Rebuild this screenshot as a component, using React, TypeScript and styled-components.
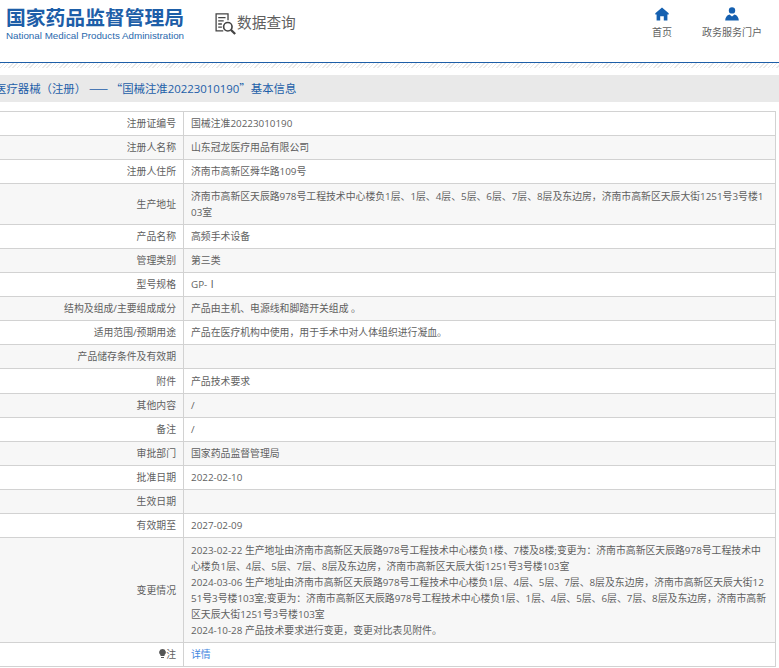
import React from 'react'
import styled, { createGlobalStyle } from 'styled-components'

const GlobalStyle = createGlobalStyle`
  html, body {
    margin: 0;
    padding: 0;
    background: #fff;
    overflow: hidden;
  }
  body {
    font-family: 'Open Sans', 'Noto Sans CJK SC', sans-serif;
    color: #5f5f5f;
  }
`

const Page = styled.div`
  width: 779px;
  height: 668px;
  overflow: hidden;
`

const Header = styled.header`
  display: flex;
  height: 62px;
  box-sizing: border-box;
  padding: 6px 0 0 6px;
`

const Logo = styled.div`
  width: 209px;
`

const LogoTitle = styled.div`
  color: #1d5ea8;
  font-family: 'Noto Sans CJK SC', sans-serif;
  font-size: 19.8px;
  font-weight: 700;
  line-height: 22px;
  white-space: nowrap;
`

const LogoSub = styled.div`
  color: #2a69ad;
  font-family: 'Liberation Sans', sans-serif;
  font-size: 9.8px;
  line-height: 12px;
  margin-top: 2px;
  white-space: nowrap;
`

const QueryTitle = styled.div`
  display: flex;
  align-items: flex-start;
  width: 415px;
  padding-top: 6px;
  color: #5f5f5f;
  font-size: 14.7px;
  line-height: 20px;
`

const Nav = styled.nav`
  display: flex;
  padding-top: 1px;
`

const NavItem = styled.div<{ wide?: boolean }>`
  display: flex;
  flex-direction: column;
  align-items: center;
  width: ${props => (props.wide ? '76px' : '64px')};
  color: #5f5f5f;
  font-size: 10px;
  line-height: 14px;
  white-space: nowrap;

  svg {
    display: block;
    margin-bottom: 4px;
  }
`

const BlueRule = styled.div`
  height: 1px;
  background: #1d5ea8;
`

const Hatch = styled.div`
  height: 5px;
  background: repeating-linear-gradient(135deg, #e8e8e8 0 1px, #fff 1px 3px);
`

const TitleBar = styled.div`
  margin-top: 7px;
  height: 27px;
  background: #e9e9e9;
  color: #1d5ea8;
  font-size: 11.4px;
  line-height: 27px;
  text-indent: -5px;
  white-space: nowrap;
  overflow: hidden;
`

const WideMark = styled.span`
  font-family: 'Noto Sans CJK SC', sans-serif;
`

const DetailTable = styled.table`
  margin: 9px 0 0 -1px;
  width: 777px;
  border-collapse: collapse;
  table-layout: fixed;
  font-size: 9.85px;
  line-height: 16px;
`

const Row = styled.tr<{ shaded: boolean }>`
  background: ${props => (props.shaded ? '#f7f7f7' : '#fff')};
`

const Label = styled.td`
  border: 1px solid #d2d2d2;
  padding: 3.2px 7px 3.96px 0;
  text-align: right;
  vertical-align: middle;
`

const Value = styled.td`
  border: 1px solid #d2d2d2;
  padding: 3.2px 7px 3.96px;
  text-align: left;
  word-break: break-all;
`

const DetailLink = styled.span`
  color: #3f87e0;
`

const SearchDocIcon = () => (
  <svg width="22" height="24" viewBox="0 0 24 24" fill="none" stroke="#444" strokeWidth="1.4">
    <path d="M9 19.5H1.2V1h13v7" />
    <path d="M3.5 5h8M3.5 8.5h6M3.5 12h4M3.5 15.5h4" />
    <circle cx="14" cy="15" r="4.6" strokeWidth="1.8" />
    <path d="M17.4 18.4 22 23" strokeWidth="2.4" />
  </svg>
)

const HomeIcon = () => (
  <svg width="14" height="14" viewBox="0 0 14 14" fill="#1560b0">
    <path d="M7 .5 .3 6.2v1.3h1.3V13.5h3.6V9.2h3.6v4.3h3.6V7.5h1.3V6.2Z" />
  </svg>
)

const PersonIcon = () => (
  <svg width="14" height="14" viewBox="0 0 14 14" fill="#1560b0">
    <circle cx="7" cy="3.4" r="3.2" />
    <path d="M.2 13.6c0-3.2 1.6-5.6 4.3-6.2L7 9.4l2.5-2c2.7.6 4.3 3 4.3 6.2Z" />
  </svg>
)

const BulbIcon = () => (
  <svg width="7" height="9" viewBox="0 0 7 9" fill="#555">
    <path d="M3.5 0a3.4 3.4 0 0 0-2 6.1V7h4v-.9a3.4 3.4 0 0 0-2-6.1ZM2 8h3v1H2Z" />
  </svg>
)

const rows: { label: React.ReactNode; value: React.ReactNode }[] = [
  { label: '注册证编号', value: '国械注准20223010190' },
  { label: '注册人名称', value: '山东冠龙医疗用品有限公司' },
  { label: '注册人住所', value: '济南市高新区舜华路109号' },
  {
    label: '生产地址',
    value: '济南市高新区天辰路978号工程技术中心楼负1层、1层、4层、5层、6层、7层、8层及东边房，济南市高新区天辰大街1251号3号楼103室',
  },
  { label: '产品名称', value: '高频手术设备' },
  { label: '管理类别', value: '第三类' },
  { label: '型号规格', value: 'GP-Ⅰ' },
  { label: '结构及组成/主要组成成分', value: '产品由主机、电源线和脚踏开关组成 。' },
  { label: '适用范围/预期用途', value: '产品在医疗机构中使用，用于手术中对人体组织进行凝血。' },
  { label: '产品储存条件及有效期', value: '' },
  { label: '附件', value: '产品技术要求' },
  { label: '其他内容', value: '/' },
  { label: '备注', value: '/' },
  { label: '审批部门', value: '国家药品监督管理局' },
  { label: '批准日期', value: '2022-02-10' },
  { label: '生效日期', value: '' },
  { label: '有效期至', value: '2027-02-09' },
  {
    label: '变更情况',
    value: (
      <>
        2023-02-22 生产地址由济南市高新区天辰路978号工程技术中心楼负1楼、7楼及8楼;变更为：济南市高新区天辰路978号工程技术中心楼负1层、4层、5层、7层、8层及东边房，济南市高新区天辰大街1251号3号楼103室
        <br />
        2024-03-06 生产地址由济南市高新区天辰路978号工程技术中心楼负1层、4层、5层、7层、8层及东边房，济南市高新区天辰大街1251号3号楼103室;变更为：济南市高新区天辰路978号工程技术中心楼负1层、1层、4层、5层、6层、7层、8层及东边房，济南市高新区天辰大街1251号3号楼103室
        <br />
        2024-10-28 产品技术要求进行变更，变更对比表见附件。
      </>
    ),
  },
  {
    label: (
      <>
        <BulbIcon />注
      </>
    ),
    value: <DetailLink>详情</DetailLink>,
  },
]

const App = () => (
  <Page>
    <GlobalStyle />
    <Header>
      <Logo>
        <LogoTitle>国家药品监督管理局</LogoTitle>
        <LogoSub>National Medical Products Administration</LogoSub>
      </Logo>
      <QueryTitle>
        <SearchDocIcon />
        数据查询
      </QueryTitle>
      <Nav>
        <NavItem>
          <HomeIcon />
          首页
        </NavItem>
        <NavItem wide>
          <PersonIcon />
          政务服务门户
        </NavItem>
      </Nav>
    </Header>
    <BlueRule />
    <Hatch />
    <TitleBar>
      医疗器械（注册） <WideMark>—— “</WideMark>国械注准20223010190<WideMark>”</WideMark>基本信息
    </TitleBar>
    <DetailTable>
      <colgroup>
        <col style={{ width: 184 }} />
        <col />
      </colgroup>
      <tbody>
        {rows.map((row, i) => (
          <Row key={i} shaded={i % 2 === 1}>
            <Label>{row.label}</Label>
            <Value>{row.value}</Value>
          </Row>
        ))}
      </tbody>
    </DetailTable>
  </Page>
)

export default App
